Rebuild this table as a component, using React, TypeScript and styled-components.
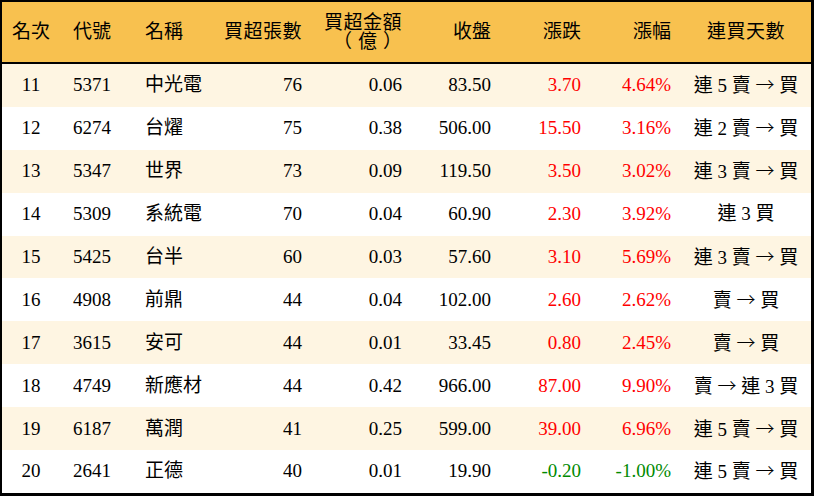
import React from "react";
import styled, { createGlobalStyle } from "styled-components";

const Global = createGlobalStyle`
  html, body { margin: 0; padding: 0; background: #ffffff; }
  body { font-family: "Liberation Serif", "Noto Sans CJK TC", serif; }
`;

type Align = "left" | "center" | "right";

const COLS = "58px 70px 90px 92px 100px 89px 90px 90px 130px";

const Frame = styled.div`
  width: 814px;
  height: 496px;
  box-sizing: border-box;
  border-style: solid;
  border-color: #000;
  border-width: 2px 3px 3px 2px;
  display: flex;
  flex-direction: column;
  font-family: "Liberation Serif", "Noto Sans CJK TC", serif;
  font-size: 19px;
  color: #000;
`;

const HeaderRow = styled.div`
  display: grid;
  grid-template-columns: ${COLS};
  height: 60px;
  background: #f8c14f;
  border-bottom: 2px solid #000;
`;

const Row = styled.div<{ $alt: boolean }>`
  display: grid;
  grid-template-columns: ${COLS};
  height: 42.9px;
  background: ${(p) => (p.$alt ? "#fef5e2" : "#ffffff")};
`;

const Cell = styled.div<{ $align: Align; $pl?: number; $tone?: "up" | "down" }>`
  display: flex;
  flex-direction: column;
  justify-content: center;
  align-items: ${(p) =>
    p.$align === "left" ? "flex-start" : p.$align === "right" ? "flex-end" : "center"};
  text-align: ${(p) => p.$align};
  padding-left: ${(p) => (p.$pl ?? 0)}px;
  padding-right: ${(p) => (p.$align === "right" ? 10 : 0)}px;
  white-space: nowrap;
  line-height: 20px;
  color: ${(p) => (p.$tone === "up" ? "#ff0000" : p.$tone === "down" ? "#008a00" : "#000")};
`;

const Line = styled.span`
  display: block;
  letter-spacing: 0.5px;
`;

const Unit = styled.span`
  display: block;
  letter-spacing: 6px;
  margin-right: -6px;
  margin-top: -1px;
`;

const Streak = styled.span`
  display: block;
  white-space: pre;
`;

const Arrow = styled.span`
  font-family: "Noto Sans CJK TC", sans-serif;
  font-weight: 300;
  font-size: 19px;
`;

type ColSpec = { align: Align; pl?: number };
const SPECS: ColSpec[] = [
  { align: "center" },
  { align: "left", pl: 13 },
  { align: "left", pl: 15 },
  { align: "right" },
  { align: "right" },
  { align: "right" },
  { align: "right" },
  { align: "right" },
  { align: "center" },
];

const HEAD: React.ReactNode[] = [
  "名次",
  "代號",
  "名稱",
  <Line key="a">買超張數</Line>,
  (
    <>
      <Line>買超金額</Line>
      <Unit>（億）</Unit>
    </>
  ),
  "收盤",
  "漲跌",
  "漲幅",
  <Line key="b">連買天數</Line>,
];

type Item = [string, string, string, string, string, string, string, string, string];

const DATA: Item[] = [
  ["11", "5371", "中光電", "76", "0.06", "83.50", "3.70", "4.64%", "連 5 賣 → 買"],
  ["12", "6274", "台燿", "75", "0.38", "506.00", "15.50", "3.16%", "連 2 賣 → 買"],
  ["13", "5347", "世界", "73", "0.09", "119.50", "3.50", "3.02%", "連 3 賣 → 買"],
  ["14", "5309", "系統電", "70", "0.04", "60.90", "2.30", "3.92%", "連 3 買"],
  ["15", "5425", "台半", "60", "0.03", "57.60", "3.10", "5.69%", "連 3 賣 → 買"],
  ["16", "4908", "前鼎", "44", "0.04", "102.00", "2.60", "2.62%", "賣 → 買"],
  ["17", "3615", "安可", "44", "0.01", "33.45", "0.80", "2.45%", "賣 → 買"],
  ["18", "4749", "新應材", "44", "0.42", "966.00", "87.00", "9.90%", "賣 → 連 3 買"],
  ["19", "6187", "萬潤", "41", "0.25", "599.00", "39.00", "6.96%", "連 5 賣 → 買"],
  ["20", "2641", "正德", "40", "0.01", "19.90", "-0.20", "-1.00%", "連 5 賣 → 買"],
];

function renderStreak(s: string) {
  const parts = s.split("→");
  return (
    <Streak>
      {parts.map((p, i) => (
        <React.Fragment key={i}>
          {i > 0 && <Arrow>→</Arrow>}
          {p}
        </React.Fragment>
      ))}
    </Streak>
  );
}

export default function App() {
  return (
    <>
      <Global />
      <Frame>
        <HeaderRow>
          {HEAD.map((h, i) => (
            <Cell key={i} $align={SPECS[i].align} $pl={SPECS[i].pl}>
              {h}
            </Cell>
          ))}
        </HeaderRow>
        {DATA.map((r, ri) => {
          const tone = r[6].startsWith("-") ? "down" : "up";
          return (
            <Row key={r[0]} $alt={ri % 2 === 0}>
              {r.map((v, i) => (
                <Cell
                  key={i}
                  $align={SPECS[i].align}
                  $pl={SPECS[i].pl}
                  $tone={i === 6 || i === 7 ? tone : undefined}
                >
                  {i === 8 ? renderStreak(v) : v}
                </Cell>
              ))}
            </Row>
          );
        })}
      </Frame>
    </>
  );
}
